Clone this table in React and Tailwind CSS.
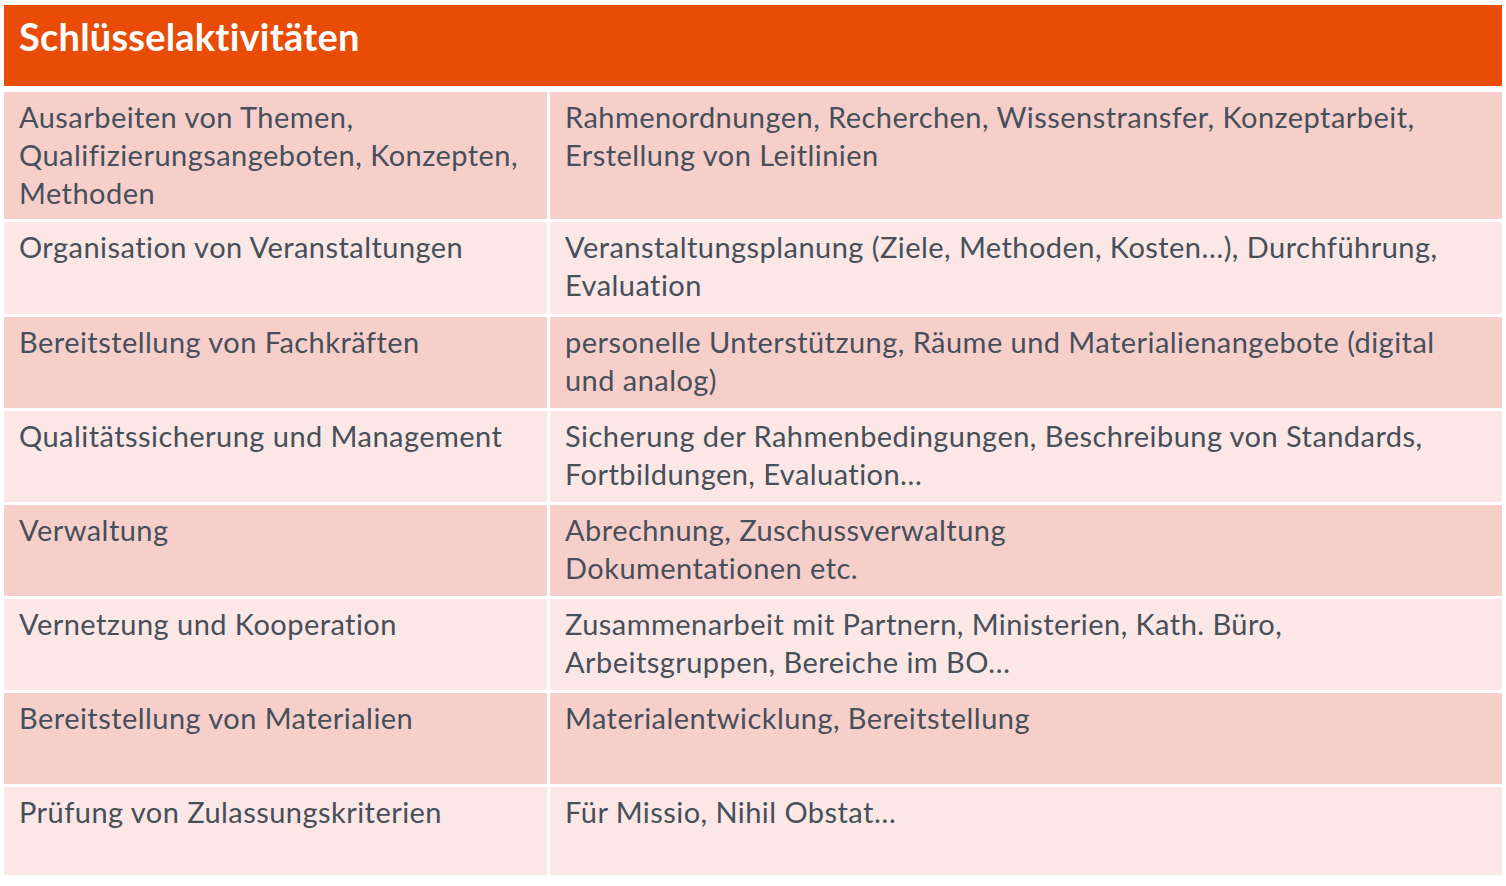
const rows = [
  {
    h: 'h-[127px]',
    dark: true,
    left: ['Ausarbeiten von Themen,', 'Qualifizierungsangeboten, Konzepten,', 'Methoden'],
    right: ['Rahmenordnungen, Recherchen, Wissenstransfer, Konzeptarbeit,', 'Erstellung von Leitlinien'],
  },
  {
    h: 'h-[92px]',
    left: ['Organisation von Veranstaltungen'],
    right: ['Veranstaltungsplanung (Ziele, Methoden, Kosten…), Durchführung,', 'Evaluation'],
  },
  {
    h: 'h-[91px]',
    dark: true,
    left: ['Bereitstellung von Fachkräften'],
    right: ['personelle Unterstützung, Räume und Materialienangebote (digital', 'und analog)'],
  },
  {
    h: 'h-[91px]',
    left: ['Qualitätssicherung und Management'],
    right: ['Sicherung der Rahmenbedingungen, Beschreibung von Standards,', 'Fortbildungen, Evaluation…'],
  },
  {
    h: 'h-[91px]',
    dark: true,
    left: ['Verwaltung'],
    right: ['Abrechnung, Zuschussverwaltung', 'Dokumentationen etc.'],
  },
  {
    h: 'h-[91px]',
    left: ['Vernetzung und Kooperation'],
    right: ['Zusammenarbeit mit Partnern, Ministerien, Kath. Büro,', 'Arbeitsgruppen, Bereiche im BO…'],
  },
  {
    h: 'h-[91px]',
    dark: true,
    left: ['Bereitstellung von Materialien'],
    right: ['Materialentwicklung, Bereitstellung'],
  },
  {
    h: 'h-[88px]',
    left: ['Prüfung von Zulassungskriterien'],
    right: ['Für Missio, Nihil Obstat…'],
  },
]

function Cell({ lines, dark, h }) {
  return (
    <div className={`${h} ${dark ? 'bg-[#f6cfcb]' : 'bg-[#fbe7e6]'} pl-[15px] pt-[6px]`}>
      {lines.map((line, i) => (
        <div key={i} className="whitespace-nowrap leading-[38px]">
          {line}
        </div>
      ))}
    </div>
  )
}

export default function App() {
  return (
    <div
      className="w-[1506px] h-[886px] bg-white pt-[5px] px-[4px] text-[#474f59] text-[29px] tracking-[0.45px]"
      style={{ fontFamily: 'Lato, "Open Sans", sans-serif' }}
    >
      {/* Header */}
      <div className="h-[81px] bg-[#e84c07] pl-[15px] pt-[9px]">
        <h1 className="text-white font-bold text-[38px] leading-[44px] tracking-[0.2px]">Schlüsselaktivitäten</h1>
      </div>

      {/* Table */}
      <div className="mt-[6px] grid grid-cols-[543px_1fr] gap-[3px]">
        {rows.map((row, i) => (
          <div key={i} className="contents">
            <Cell lines={row.left} dark={row.dark} h={row.h} />
            <Cell lines={row.right} dark={row.dark} h={row.h} />
          </div>
        ))}
      </div>
    </div>
  )
}
